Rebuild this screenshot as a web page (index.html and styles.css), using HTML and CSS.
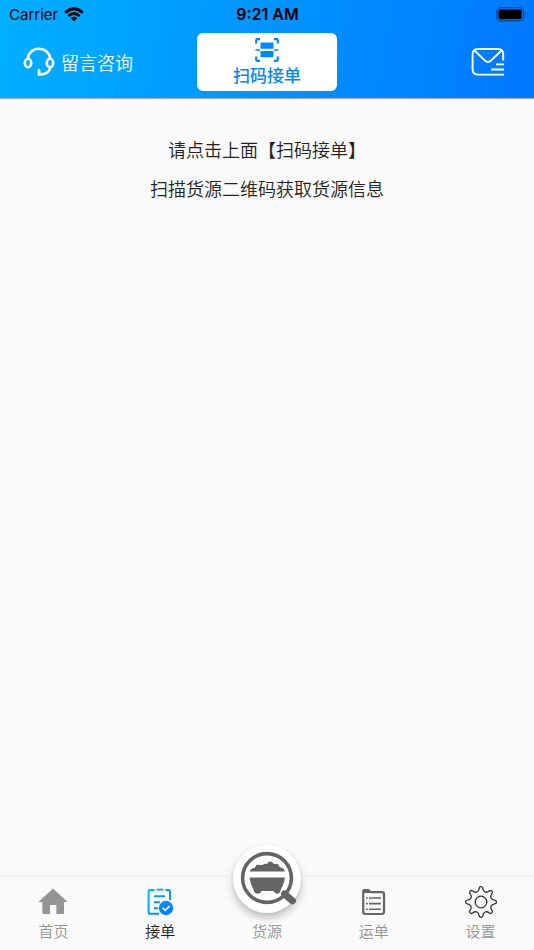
FILE: index.html
```html
<!DOCTYPE html>
<html lang="zh-CN">
<head>
<meta charset="utf-8">
<meta name="viewport" content="width=device-width, initial-scale=1">
<title>扫码接单</title>
<link rel="stylesheet" href="styles.css">
</head>
<body>
<header class="header">
  <div class="status">
    <div class="carrier">
      <span>Carrier</span>
      <svg width="20" height="15" viewBox="0 0 20 15" fill="none" stroke="#000" stroke-width="2.8" aria-hidden="true">
        <path d="M1.2 5.7Q10-2.3 18.8 5.7M4.4 9Q10 4 15.6 9"/>
        <path d="M6.8 11.1Q10 8.5 13.2 11.1L10 14.4Z" fill="#000" stroke="none"/>
      </svg>
    </div>
    <div class="time">9:21 AM</div>
    <div class="battery">
      <svg width="30" height="15" viewBox="0 0 30 15" aria-hidden="true">
        <rect x=".7" y=".7" width="26.8" height="13.2" rx="4" fill="none" stroke="#000" stroke-opacity=".45" stroke-width="1.2"/>
        <rect x="2.5" y="2.4" width="23.2" height="9.8" rx="2" fill="#000"/>
        <path d="M28.7 5Q30.4 7.2 28.7 9.4Z" fill="#000" fill-opacity=".5"/>
      </svg>
    </div>
  </div>
  <div class="toolbar">
    <a class="consult" href="#consult">
      <svg width="32" height="30" viewBox="0 0 32 30" fill="none" stroke="#fff" stroke-width="2.6" stroke-linecap="round" aria-hidden="true">
        <path d="M4.6 11.5C5.4 5.8 10 1.8 16 1.8S26.6 5.8 27.4 11.5M27.5 20C26.5 24.6 22.5 27.6 16 27.4V23"/>
        <ellipse cx="5" cy="16" rx="3.2" ry="4.3"/>
        <ellipse cx="27" cy="16" rx="3.2" ry="4.3"/>
      </svg>
      <span>留言咨询</span>
    </a>
    <button class="scan" type="button">
      <svg width="24" height="24" viewBox="0 0 24 24" aria-hidden="true">
        <path d="M1.2 5.5V2.2Q1.2 1.2 2.2 1.2H5M19 1.2H21.8Q22.8 1.2 22.8 2.2V5.5M1.2 18.5V21.8Q1.2 22.8 2.2 22.8H5M19 22.8H21.8Q22.8 22.8 22.8 21.8V18.5" fill="none" stroke="#0088ff" stroke-width="2.2"/>
        <path d="M5.5 4.5H18.5V10.8H5.5ZM5.5 13H18.5V19.2H5.5ZM.5 11.2H5V12.8H.5ZM19 11.2H23.5V12.8H19Z" fill="#0088ff"/>
      </svg>
      <span>扫码接单</span>
    </button>
    <button class="mail" type="button" aria-label="消息">
      <svg width="34" height="30" viewBox="0 0 34 30" fill="none" stroke="#fff" stroke-width="1.9" aria-hidden="true">
        <path d="M33 27.6H7Q1.6 27.6 1.6 22.2V7.2Q1.6 2 7 2H27Q32.2 2 32.2 7.2V13.6M3.6 3.6L14.2 13.8Q17 16.2 19.8 13.8L30.4 3.6M25 17.4H33M20 22.5H33"/>
      </svg>
    </button>
  </div>
</header>
<main class="content">
  <p>请点击上面【扫码接单】</p>
  <p>扫描货源二维码获取货源信息</p>
</main>
<nav class="tabs">
  <a class="tab" href="#home">
    <svg width="34" height="34" viewBox="0 0 34 34" aria-hidden="true">
      <path d="M17 3.6L31.6 17H28V28.4Q28 29 27.4 29H20.4V20H14V29H7.2Q6.4 29 6.4 28.2V17H2.4Z" fill="#929496"/>
    </svg>
    <span>首页</span>
  </a>
  <a class="tab active" href="#accept" aria-current="page">
    <svg width="34" height="34" viewBox="0 0 34 34" aria-hidden="true">
      <defs>
        <linearGradient id="blue" x1="4" y1="4" x2="30" y2="30" gradientUnits="userSpaceOnUse">
          <stop stop-color="#00baff"/><stop offset="1" stop-color="#0074ff"/>
        </linearGradient>
      </defs>
      <path d="M11.5 5H7Q5.6 5 5.6 6.4V27.2Q5.6 28.8 7.2 28.8H16M22.5 5H25.6Q27 5 27 6.4V15M13.5 4.6H20.5M11 11.3H22M11 17.2H17M11 23.2H15" fill="none" stroke="url(#blue)" stroke-width="1.9"/>
      <circle cx="23" cy="23" r="7.2" fill="url(#blue)"/>
      <path d="M19.6 22.8L22.2 25.4L26.7 21" fill="none" stroke="#fff" stroke-width="1.6"/>
    </svg>
    <span>接单</span>
  </a>
  <a class="tab" href="#goods">
    <span class="bubble">
      <svg width="60" height="60" viewBox="-5 -1 60 60" aria-hidden="true">
        <circle cx="25" cy="28" r="24.4" fill="none" stroke="#646464" stroke-width="3.6"/>
        <path d="M42.5 44L50.5 50.8" stroke="#646464" stroke-width="7" stroke-linecap="round"/>
        <path d="M7.5 21.5L9 19L13 17.5L14.5 14.8L20 15L23 13.7H25.5L26.5 11.8H30L31.5 13.8L35.5 14L38 17.2L41.5 18.5L43 21.5Z" fill="#646464"/>
        <path d="M7.5 27.4H43L42 32.5L38.5 40.5Q37.8 44 34.6 43.8Q32.5 43.2 31.7 41H19.5Q18.5 43.8 15.7 43.8Q12.3 43.8 11.8 40.5L8.5 32.5Z" fill="#646464"/>
      </svg>
    </span>
    <span>货源</span>
  </a>
  <a class="tab" href="#orders">
    <svg width="34" height="34" viewBox="0 0 34 34" aria-hidden="true">
      <path d="M6.2 7V26.8Q6.2 29 8.4 29H24.8Q27 29 27 26.8V9.3Q27 7.1 24.8 7.1H14" fill="none" stroke="#646464" stroke-width="2.2"/>
      <path d="M5.2 9V5.8Q5.2 4 7 4H11.5Q13 4 13.5 5.8L14.5 8H5.2Z" fill="#646464"/>
      <path d="M12 13H24M12 18.6H24M12 24.2H24M9 13H10.8M9 18.6H10.8M9 24.2H10.8" stroke="#646464" stroke-width="1.6"/>
    </svg>
    <span>运单</span>
  </a>
  <a class="tab" href="#settings">
    <svg width="34" height="34" viewBox="-17 -17 34 34" fill="none" stroke="#333" stroke-width="1.3" aria-hidden="true">
      <path id="teeth" d="M-4.1-10Q-2.2-10.8-1.8-13.6A1.8 1.8 0 0 1 1.8-13.6Q2.2-10.8 4.1-10Q6.1-9.2 8.3-10.9A1.8 1.8 0 0 1 10.9-8.3Q9.2-6.1 10-4.1"/>
      <use href="#teeth" transform="rotate(90)"/>
      <use href="#teeth" transform="rotate(180)"/>
      <use href="#teeth" transform="rotate(270)"/>
      <circle r="5.8"/>
    </svg>
    <span>设置</span>
  </a>
</nav>
</body>
</html>
```
FILE: styles.css
```css
* {
  box-sizing: border-box;
}

body {
  margin: 0;
  min-height: 100vh;
  display: flex;
  flex-direction: column;
  background: #fafafa;
  color: #222;
  font-family: "Noto Sans CJK SC", sans-serif;
  font-weight: 350;
}

svg {
  display: block;
  flex: none;
}

a {
  color: inherit;
  text-decoration: none;
}

button {
  padding: 0;
  border: 0;
  background: none;
  font: inherit;
  cursor: pointer;
}

.header {
  background: linear-gradient(100deg, #00b0ff, #0078ff);
  box-shadow: 0 1px 1px rgba(0, 0, 0, 0.3);
}

.status {
  display: grid;
  grid-template-columns: 1fr auto 1fr;
  align-items: center;
  height: 28px;
  padding: 0 8px 0 9px;
  color: #000;
  font-family: Inter, sans-serif;
  font-size: 15px;
  font-weight: 400;
}

.carrier {
  display: flex;
  align-items: center;
  gap: 6px;
}

.time {
  font-size: 16px;
  font-weight: 600;
}

.battery {
  justify-self: end;
}

.toolbar {
  display: grid;
  grid-template-columns: 1fr auto 1fr;
  align-items: center;
  height: 70px;
  padding: 0 29px 2px 23px;
}

.consult {
  display: flex;
  align-items: center;
  gap: 6px;
  color: #fff;
  font-size: 18px;
  line-height: 26px;
}

.scan {
  display: flex;
  flex-direction: column;
  align-items: center;
  width: 140px;
  height: 58px;
  margin-left: 6px;
  padding-top: 5px;
  border-radius: 6px;
  background: #fff;
  color: #0088ff;
  font-size: 17px;
  font-weight: 500;
  line-height: 26px;
}

.mail {
  justify-self: end;
}

.content {
  flex: 1;
  padding-top: 32px;
  font-size: 18px;
  line-height: 39px;
  text-align: center;
}

.content p {
  margin: 0;
}

.tabs {
  display: grid;
  grid-template-columns: repeat(5, 1fr);
  height: 75px;
  border-top: 2px solid #f2f2f2;
}

.tab {
  position: relative;
  display: flex;
  flex-direction: column;
  align-items: center;
  justify-content: flex-end;
  padding-bottom: 8px;
  color: #949494;
  font-size: 15px;
  line-height: 22px;
}

.tab > svg {
  margin-bottom: 1px;
}

.active {
  color: #222;
}

.bubble {
  position: absolute;
  top: -32px;
  display: flex;
  align-items: center;
  justify-content: center;
  width: 68px;
  height: 68px;
  border-radius: 50%;
  background: #fff;
  box-shadow: 0 4px 8px rgba(0, 0, 0, 0.3), 0 0 0 5px #fdfdfd;
}
```
